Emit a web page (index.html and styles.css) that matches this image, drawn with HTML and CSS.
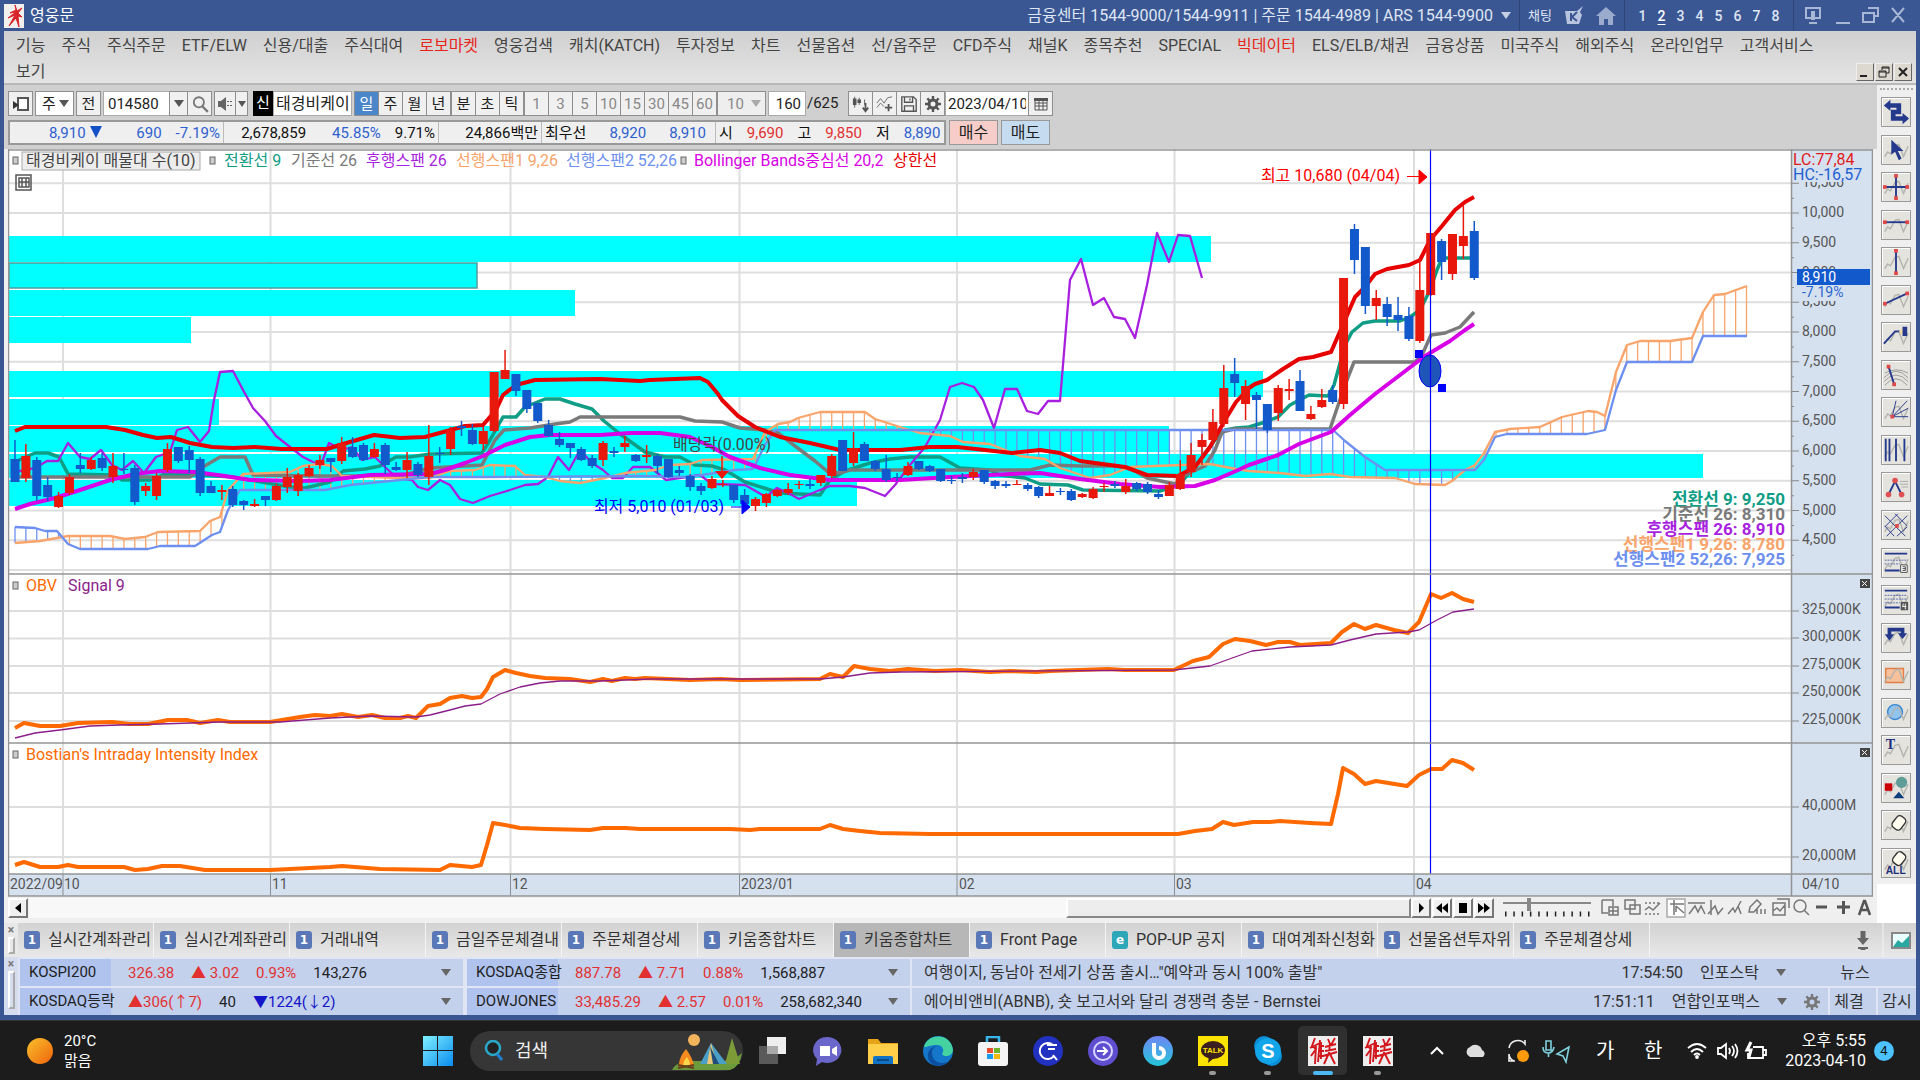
FILE: index.html
```
<!DOCTYPE html>
<html lang="ko">
<head>
  <meta charset="UTF-8" />
  <title>영웅문</title>
  <meta name="viewport" content="width=device-width, initial-scale=1.0" />
  <link rel="stylesheet" href="styles.css">
</head>
<body>
  <!-- shared shapes -->
  <svg class="defs" aria-hidden="true">
    <symbol id="wave" viewBox="0 0 30 30"><path d="M3 22l3-5 3 2 5-9 4-1 5 13 5-11" fill="none" stroke="#b3b3ae" stroke-width="1.5"/></symbol>
    <symbol id="gear" viewBox="0 0 16 16"><circle cx="8" cy="8" r="4" fill="none" stroke="currentColor" stroke-width="3"/><path d="M8 0v3M8 13v3M0 8h3M13 8h3M2.300 2.300l2.200 2.200M11.500 11.500l2.200 2.200M2.300 13.700l2.200-2.200M11.500 4.500l2.200-2.200" stroke="currentColor" stroke-width="2.400"/></symbol>
    <symbol id="lens" viewBox="0 0 16 16"><circle cx="7" cy="6.500" r="4.500" fill="none" stroke="currentColor" stroke-width="1.600"/><path d="M10 10l5 5" stroke="currentColor" stroke-width="2"/></symbol>
    <symbol id="hero" viewBox="0 0 30 30"><rect width="30" height="30" fill="#eee"/><path d="M7 2L4 10l4 3-5 7M2 12l10-5M8 9l-1 19M12 4l-2 22M11 10h5M11 15h5M11 20h5M13 6v17M20 3l2 5M27 2l-4 7M17 11l11-3M17 15l11-2M22 7l-1 11M15 20l14-4M21 17l-5 11M22 18l5 10" fill="none" stroke="#d2161c" stroke-width="1.900"/></symbol>
  </svg>

  <div class="app">
    <header class="titlebar">
      <svg class="brand" viewBox="0 0 20 24"><rect width="20" height="24" fill="#f3efec"/><path d="M11 1l1 5-6 3 6-1-8 6 7-3-6 11 7-8 3 9-1-11 4 1-4-4 4-5-5 3z" fill="#d8242a" stroke="#d8242a"/></svg>
      <span class="appname">영웅문</span>
      <span class="phones">금융센터 1544-9000/1544-9911 | 주문 1544-4989 | ARS 1544-9900</span>
      <span class="tri light"></span>
      <span class="vline"></span>
      <span class="chat">채팅</span>
      <svg width="20" height="20" viewBox="0 0 20 20"><path d="M1 5h12l6-5-3 6 2 3-3 9H3z" fill="#b9c4de"/><path d="M7 7v8M13 6l-5 5 5 4" stroke="#3a5794" stroke-width="2" fill="none"/></svg>
      <svg class="home" width="20" height="20" viewBox="0 0 20 20"><path d="M0 10L10 1l10 9h-3v9h-5v-6H8v6H3v-9z" fill="#9aabce"/></svg>
      <span class="vline"></span>
      <nav class="screens"><b>1</b><b class="on">2</b><b>3</b><b>4</b><b>5</b><b>6</b><b>7</b><b>8</b></nav>
      <span class="vline"></span>
      <svg class="winbtns" width="104" height="20" viewBox="0 0 104 20" fill="none" stroke="#a9b7d6" stroke-width="2"><path d="M4 2h14v10H4zM7 17h8M34 17h14M66 2h10v8h-4M61 7h11v9H61zM90 2l12 14M102 2L90 16"/><path d="M9 5h4v9H9z" fill="#a9b7d6" stroke="none"/></svg>
    </header>

    <nav class="menu">
      <div class="menu-row">
        <a>기능</a><a>주식</a><a>주식주문</a><a>ETF/ELW</a><a>신용/대출</a><a>주식대여</a><a class="hot">로보마켓</a><a>영웅검색</a><a>캐치(KATCH)</a><a>투자정보</a><a>차트</a><a>선물옵션</a><a>선/옵주문</a><a>CFD주식</a><a>채널K</a><a>종목추천</a><a>SPECIAL</a><a class="hot">빅데이터</a><a>ELS/ELB/채권</a><a>금융상품</a><a>미국주식</a><a>해외주식</a><a>온라인업무</a><a>고객서비스</a>
      </div>
      <div class="menu-row">
        <a>보기</a>
        <div class="mdi">
          <button aria-label="최소화"><svg viewBox="0 0 14 14"><path d="M2 11h7" stroke="#222" stroke-width="2"/></svg></button>
          <button aria-label="복원"><svg viewBox="0 0 14 14"><path d="M5 5V2h7v6H9M2 6h7v6H2zM2 7h7M5 3h7" fill="none" stroke="#222"/></svg></button>
          <button aria-label="닫기"><svg viewBox="0 0 14 14"><path d="M3 3l8 8M11 3l-8 8" stroke="#222" stroke-width="2"/></svg></button>
        </div>
      </div>
    </nav>

    <div class="work">
      <main class="main">
        <div class="toolbar">
          <button class="w24" aria-label="창"><svg viewBox="0 0 18 18"><path d="M6 3h10v12H6z" fill="#fff" stroke="#555" stroke-width="2"/><path d="M1 6l6 4-6 4z" fill="#333"/></svg></button>
          <span class="pick w39"><select aria-label="종목구분"><option>주</option></select></span>
          <button class="w24">전</button>
          <input class="code" value="014580" aria-label="종목코드">
          <button class="w18 joined" aria-label="목록"><span class="tri"></span></button>
          <button class="w24 joined" aria-label="검색"><svg viewBox="0 0 16 16" color="#777"><use href="#lens"/></svg></button>
          <button class="w21" aria-label="소리"><svg viewBox="0 0 18 18"><path d="M2 6h3l5-4v14l-5-4H2z" fill="#666"/><path d="M12 6v1M12 10v1M15 6v1M15 10v1" stroke="#666" stroke-width="2"/></svg></button>
          <button class="w12 joined" aria-label="소리 목록"><span class="tri small"></span></button>
          <span class="badge-new">신</span><span class="stock">태경비케이</span>
          <div class="seg"><button class="on">일</button><button>주</button><button>월</button><button>년</button></div>
          <div class="seg"><button>분</button><button>초</button><button>틱</button></div>
          <div class="seg dim"><button>1</button><button>3</button><button>5</button><button>10</button><button>15</button><button>30</button><button>45</button><button>60</button></div>
          <span class="pick w48 dim"><select aria-label="틱수"><option>10</option></select></span>
          <input class="count" value="160" aria-label="봉수"><span class="total">/625</span>
          <div class="seg icons">
            <button aria-label="차트형태"><svg viewBox="0 0 20 20"><path d="M3 2v12M8 3v8M14 5v6" stroke="#555"/><path d="M1 4h4v7H1zM6 5h4v4H6z" fill="#555"/><path d="M15 9v8M12 14l3 4 3-4" stroke="#555" stroke-width="2" fill="none"/></svg></button>
            <button aria-label="지표"><svg viewBox="0 0 20 20"><path d="M1 9l4-5 4 5 4-6 5-1M1 14l4-5 4 4" stroke="#666" fill="none"/><path d="M14 10v8M10 14h8" stroke="#555" stroke-width="2"/></svg></button>
            <button aria-label="저장"><svg viewBox="0 0 20 20"><path d="M2 2h13l3 3v13H2zM5 2v6h9V2M5 18v-6h10v6M11 4v2" fill="none" stroke="#555" stroke-width="1.500"/></svg></button>
            <button aria-label="설정"><svg viewBox="0 0 18 18" color="#555"><use href="#gear" x="1" y="1" width="16" height="16"/></svg></button>
          </div>
          <input class="date" value="2023/04/10" aria-label="날짜"><button class="w24 joined" aria-label="달력"><svg viewBox="0 0 18 18"><path d="M3 4h12v11H3zM3 8h12M3 11h12M7 5v10M11 5v10" fill="none" stroke="#555"/><path d="M2 3h14v3H2z" fill="#555"/></svg></button>
        </div>

        <div class="quote-row">
          <div class="quote">
            <div class="cell c1"><span class="dn">8,910<i class="tri down"></i></span><span class="dn">690</span><span class="dn">-7.19%</span></div>
            <div class="cell c2"><span>2,678,859</span><span class="dn">45.85%</span><span>9.71%</span></div>
            <div class="cell c3"><span>24,866백만</span></div>
            <div class="cell c4"><span>최우선</span><span class="dn">8,920</span><span class="dn">8,910</span></div>
            <div class="cell c5"><span>시</span><span class="up">9,690</span><span>고</span><span class="up">9,850</span><span>저</span><span class="dn">8,890</span></div>
          </div>
          <button class="buy">매수</button>
          <button class="sell">매도</button>
        </div>

        <svg class="chart" id="chart" viewBox="8 149 1865 748" preserveAspectRatio="xMinYMin meet"></svg>

        <div class="scroll">
          <button aria-label="왼쪽"><svg viewBox="0 0 16 16"><path d="M11 3v10L5 8z"/></svg></button>
          <div class="track"><div class="thumb"></div></div>
          <button aria-label="재생"><svg viewBox="0 0 16 16"><path d="M6 3v10l5-5z"/></svg></button>
          <button aria-label="뒤로"><svg viewBox="0 0 16 16"><path d="M8 3v10L2 8zM14 3v10L8 8z"/></svg></button>
          <button aria-label="정지"><svg viewBox="0 0 16 16"><path d="M4 3h8v10H4z"/></svg></button>
          <button aria-label="앞으로"><svg viewBox="0 0 16 16"><path d="M2 3v10l6-5zM8 3v10l6-5z"/></svg></button>
          <svg class="speed" width="88" height="20" viewBox="0 0 88 20"><path d="M0 5h88" stroke="#888" stroke-width="2"/><path d="M26 0v13" stroke="#888" stroke-width="4"/><path d="M2 16h86" stroke="#222" stroke-width="5" stroke-dasharray="1.500 6.800"/></svg>
          <svg class="drawtools" width="272" height="20" viewBox="0 0 272 20" fill="none" stroke="#777" stroke-width="1.500">
            <path d="M1 2h11v6M1 2v13h6M8 9h9v8H8zM12 9v8M8 13h9M24 2h10v9H24zM29 7h10v9H29z"/>
            <path d="M44 5h16M44 16h16" stroke-dasharray="2 2"/><path d="M44 12l4-3 4 3 7-7"/>
            <path d="M66 1v18h18V1z" stroke="#aaa" fill="#fff"/><path d="M69 6h14M73 2v15M75 8l8 7M75 8v6"/>
            <path d="M87 5h17M88 16l6-8 3 6 3-6 4 8M110 2v15M107 16l7-8 3 8 5-6M127 16l5-6 2 4 6-11M137 8l3 8M149 9l7-7 4 4-7 8h-5zM156 11v5M160 11v5M164 11v5"/>
            <path d="M176 1h12v9M172 5h12v12h-12zM172 13l4-3 3 3 5-6"/><circle cx="199" cy="8" r="6"/><path d="M203 12l5 5"/>
            <path d="M215 9h11M236 9h13M242.500 3v13" stroke="#555" stroke-width="3"/><path d="M258 17l5-14h1l5 14M260 12h7" stroke="#555" stroke-width="2.500"/>
          </svg>
        </div>
      </main>

      <aside class="tools">
        <div class="grip"></div>
        <div class="toolset" id="toolset"></div>
      </aside>
    </div>

    <div class="tabs">
      <div class="dock"><b>×</b><i></i></div>
      <button><em>1</em>실시간계좌관리</button>
      <button><em>1</em>실시간계좌관리</button>
      <button><em>1</em>거래내역</button>
      <button><em>1</em>금일주문체결내</button>
      <button><em>1</em>주문체결상세</button>
      <button><em>1</em>키움종합차트</button>
      <button class="on"><em>1</em>키움종합차트</button>
      <button><em>1</em>Front Page</button>
      <button><em class="ie">e</em>POP-UP 공지</button>
      <button><em>1</em>대여계좌신청화</button>
      <button><em>1</em>선물옵션투자위</button>
      <button><em>1</em>주문체결상세</button>
      <svg class="tabend" width="66" height="34" viewBox="0 0 66 34"><path d="M13 8v9M13 24v3" stroke="#666" stroke-width="5"/><path d="M7 15h12l-6 7zM8 24h10v2H8z" fill="#666"/><path d="M33 0v34" stroke="#f4f4f4"/><path d="M42 10h18v15H42z" fill="#e9ffff" stroke="#888" stroke-width="2"/><path d="M43 24l5-7 4 3 7-7v11z" fill="#2aa7a0"/></svg>
    </div>

    <div class="ticker">
      <div class="dock tall"><b>×</b><i></i></div>
      <div class="lines">
        <div class="line">
          <div class="idx"><span class="lbl">KOSPI200</span><span class="v up">326.38</span><span class="v up">▲ 3.02</span><span class="v up">0.93%</span><span class="v">143,276</span><span class="tri"></span></div>
          <div class="idx"><span class="lbl">KOSDAQ종합</span><span class="v up">887.78</span><span class="v up">▲ 7.71</span><span class="v up">0.88%</span><span class="v">1,568,887</span><span class="tri"></span></div>
          <div class="news"><span class="head">여행이지, 동남아 전세기 상품 출시…"예약과 동시 100% 출발"</span><span>17:54:50</span><span>인포스탁</span><span class="tri"></span><span class="tag wide">뉴스</span></div>
        </div>
        <div class="line">
          <div class="idx"><span class="lbl">KOSDAQ등락</span><span class="v up">▲306(↑7)</span><span class="v">40</span><span class="v navy">▼1224(↓2)</span><span class="tri"></span></div>
          <div class="idx"><span class="lbl">DOWJONES</span><span class="v up">33,485.29</span><span class="v up">▲ 2.57</span><span class="v up">0.01%</span><span class="v">258,682,340</span><span class="tri"></span></div>
          <div class="news"><span class="head">에어비앤비(ABNB), 숏 보고서와 달리 경쟁력 충분 - Bernstei</span><span>17:51:11</span><span>연합인포맥스</span><span class="tri"></span><svg class="gear" viewBox="0 0 16 16" color="#777"><use href="#gear"/></svg><span class="tag">체결</span><span class="tag">감시</span></div>
        </div>
      </div>
    </div>
  </div>

  <footer class="taskbar">
    <div class="weather">
      <svg width="28" height="28" viewBox="0 0 28 28"><defs><linearGradient id="sun" x2="1" y2="1"><stop stop-color="#f8c12c"/><stop offset="1" stop-color="#f0630c"/></linearGradient></defs><circle cx="14" cy="14" r="13" fill="url(#sun)"/></svg>
      <div>20°C<br>맑음</div>
    </div>
    <div class="apps">
      <svg class="start" viewBox="0 0 30 30"><defs><linearGradient id="win" x2="1" y2="1"><stop stop-color="#7ff0ff"/><stop offset="1" stop-color="#0a8cf0"/></linearGradient></defs><path d="M0 0h14v14H0zM15 0h15v14H15zM0 15h14v15H0zM15 15h15v15H15z" fill="url(#win)"/></svg>
      <label class="search">
        <svg width="20" height="22" viewBox="0 0 20 22"><circle cx="10" cy="8" r="7" fill="#222" stroke="#2aa8c8" stroke-width="2.500"/><path d="M14 14l5 6" stroke="#1c7fd0" stroke-width="3"/></svg>
        <input placeholder="검색">
        <svg class="camp" width="70" height="38" viewBox="0 0 70 38"><path d="M0 38q4-9 22-9h30q12-2 18-8-2 14-12 17z" fill="#6b9a3a"/><circle cx="22" cy="8" r="6" fill="#f3b55c"/><path d="M60 6l8 26H53z" fill="#7d9c38"/><path d="M28 32l11-21 16 21z" fill="#4a9fc8"/><path d="M39 11l-4 21h10z" fill="#e7c67a"/><path d="M38 14l3 18h6z" fill="#1f4d78"/><path d="M7 33q0-8 7-16 6 8 8 16z" fill="#f58a1f"/><path d="M11 33q1-5 4-8 3 4 3 8z" fill="#ffd84a"/><path d="M6 33l16 3M22 33L6 36" stroke="#6b3f1c" stroke-width="2"/></svg>
      </label>
      <div class="app-icon"><svg viewBox="0 0 30 30"><path d="M1 10h19v18H1z" fill="#5a5a5a"/><path d="M9 1h19v17H9z" fill="#eee"/><path d="M9 10h11v8H9z" fill="#aaa"/></svg></div>
      <div class="app-icon"><svg viewBox="0 0 30 30"><path d="M15 1a14 13 0 1 1-6 25l-6 4 1-7A14 13 0 0 1 15 1z" fill="#6b66c9"/><path d="M7 10h10v10H7zM19 13l5-3v10l-5-3z" fill="#fff"/></svg></div>
      <div class="app-icon"><svg viewBox="0 0 30 30"><path d="M0 3h10l3 4h17v21H0z" fill="#e6a317"/><path d="M0 8h30v20H0z" fill="#ffcf4a"/><path d="M5 28v-6q0-2 2-2h16q2 0 2 2v6z" fill="#1272c4"/><path d="M9 24h12" stroke="#0a4a8a" stroke-width="2"/></svg></div>
      <div class="app-icon"><svg viewBox="0 0 30 30"><circle cx="15" cy="15" r="15" fill="#1577c9"/><path d="M1 11C4-3 28-4 30 14c0 6-9 8-11 4 3-5 0-9-5-9-7 0-12 3-13 2z" fill="#43d2a0"/><path d="M9 17c0 8 8 13 17 8-4 6-19 8-21-4-1-7 5-11 9-11-3 1-5 3-5 7z" fill="#0c4f9e"/></svg></div>
      <div class="app-icon"><svg viewBox="0 0 30 30"><path d="M9 7V1h12v6" fill="none" stroke="#35b5ea" stroke-width="2.500"/><rect y="6" width="30" height="24" rx="3" fill="#f4f4f4"/><path d="M9 12h6v5H9z" fill="#e74c2c"/><path d="M16 12h6v5h-6z" fill="#6fb52c"/><path d="M9 18h6v5H9z" fill="#1c9be8"/><path d="M16 18h6v5h-6z" fill="#f5b80e"/></svg></div>
      <div class="app-icon"><svg viewBox="0 0 30 30"><circle cx="15" cy="15" r="15" fill="#2131c0"/><path d="M20 9a8 8 0 1 0 1 11M14 9h10M15 13h7M20 19l4 5" stroke="#fff" stroke-width="2" fill="none"/></svg></div>
      <div class="app-icon"><svg viewBox="0 0 30 30"><circle cx="15" cy="15" r="15" fill="#5f4fd0"/><circle cx="15" cy="15" r="9" fill="none" stroke="#dcd6ff" stroke-width="2"/><path d="M9 15h10M15 11l4 4-4 4" stroke="#fff" stroke-width="2" fill="none"/></svg></div>
      <div class="app-icon"><svg viewBox="0 0 30 30"><defs><linearGradient id="bix" x2="0" y2="1"><stop stop-color="#6f86f5"/><stop offset="1" stop-color="#22c6d8"/></linearGradient></defs><circle cx="15" cy="15" r="15" fill="url(#bix)"/><path d="M11 7v10a5 5 0 1 0 5-5" fill="none" stroke="#fff" stroke-width="4"/></svg></div>
      <div class="app-icon run"><svg viewBox="0 0 30 30"><rect width="30" height="30" fill="#fbe300"/><ellipse cx="15" cy="14" rx="12" ry="9" fill="#3b1e1e"/><path d="M11 20l-1 7 6-5z" fill="#3b1e1e"/><text x="15" y="17" text-anchor="middle" class="talk">TALK</text></svg></div>
      <div class="app-icon run"><svg viewBox="0 0 30 30"><circle cx="11" cy="10" r="10" fill="#0a8fd8"/><circle cx="19" cy="20" r="10" fill="#0a8fd8"/><circle cx="15" cy="15" r="13" fill="#12a5ea"/><text x="15" y="22" text-anchor="middle" class="skype">S</text></svg></div>
      <div class="app-icon run active"><svg viewBox="0 0 30 30"><use href="#hero"/></svg></div>
      <div class="app-icon run"><svg viewBox="0 0 30 30"><use href="#hero"/></svg></div>
    </div>
    <div class="tray">
      <svg width="142" height="26" viewBox="0 0 142 26" fill="none"><path d="M2 16l6-6 6 6" stroke="#fff" stroke-width="2"/><path d="M40 18a5 5 0 0 1 1-9 7 7 0 0 1 12 3 4 4 0 0 1 1 7H41z" fill="#ddd"/><path d="M80 10a9 9 0 0 1 16-4V2M80 16v7h6M80 16a8 8 0 0 0 5 7" stroke="#eee" stroke-width="1.600"/><circle cx="94" cy="18" r="6" fill="#ff9a0c"/><path d="M117 3h5v9h-5zM114 9q0 6 5 6t6-6M119.500 15v4" stroke="#7fd0dc" stroke-width="1.600"/><path d="M140 9l-12 7 6 2 3 6z" stroke="#7fd0dc" stroke-width="1.600"/></svg>
      <span class="ime">가</span><span class="ime">한</span>
      <svg width="80" height="24" viewBox="0 0 80 24" fill="none" stroke="#fff" stroke-width="1.800"><path d="M1 9q9-8 18 0M4 13q6-6 12 0M7 16q3-3 6 0"/><circle cx="10" cy="18" r="1"/><path d="M31 9h3l5-4v14l-5-4h-3zM42 9q2 3 0 6M45 7q4 5 0 10M48 5q5 7 0 14"/><path d="M66 8h10v11H61v-5M76 11h3v5h-3"/><path d="M64 3l-4 8h4l-2 7" stroke-width="3"/></svg>
      <div class="clock">오후 5:55<br>2023-04-10</div>
      <span class="count4">4</span>
    </div>
  </footer>
  <script src="chart.js"></script>
</body>
</html>
```
FILE: styles.css
```
* { box-sizing: border-box; }
body {
  margin: 0;
  min-height: 100vh;
  display: flex;
  flex-direction: column;
  overflow: hidden;
  background: #1c1c1c;
  font-family: Roboto, "Noto Sans CJK KR", sans-serif;
  font-size: 16px;
  line-height: 20px;
  color: #333;
}
button, input, select { font: inherit; color: inherit; margin: 0; }
button { padding: 0; display: flex; align-items: center; justify-content: center; }
.defs { position: absolute; width: 0; height: 0; }
.app { flex: 1; display: flex; flex-direction: column; border: solid #3a5794; border-width: 0 4px 5px; background: #efefef; }
.up { color: #e23030; }
.dn { color: #2e5fd0; }
.navy { color: #1414c8; }
.tri { flex: none; width: 0; height: 0; border: solid transparent; border-width: 7px 5px 0; border-top-color: #555; }
.tri.small { border-width: 6px 4px 0; border-top-color: #555; }
.tri.light { border-top-color: #c5cee2; }
.tri.down { display: inline-block; border-width: 12px 6px 0; border-top-color: #1450c8; margin-left: 4px; }

/* title bar */
.titlebar {
  height: 31px;
  margin: 0 -4px;
  padding: 0 4px;
  display: flex;
  align-items: center;
  background: #3a5794;
  color: #dfe5f2;
}
.brand { width: 20px; height: 24px; margin-right: 6px; }
.appname { flex: 1; color: #fff; }
.phones { margin-right: 8px; }
.vline { width: 1px; height: 31px; background: #2d4577; margin: 0 8px; }
.chat { font-size: 13px; margin-right: 12px; }
.home { margin-left: 12px; }
.screens { display: flex; }
.screens b { width: 19px; text-align: center; font-size: 14px; font-weight: 500; line-height: 18px; }
.screens .on { color: #fff; text-decoration: underline; text-underline-offset: 3px; }
.winbtns { margin-right: 10px; }

/* menu */
.menu { height: 54px; padding: 2px 4px 0 12px; background: linear-gradient(#d0d0d0, #e4e4e4); border-bottom: 2px solid #b8b8b8; }
.menu-row { display: flex; gap: 16px; height: 26px; align-items: center; white-space: nowrap; color: #444; }
.hot { color: #e8251b; }
.mdi { margin-left: auto; display: flex; gap: 1px; }
.mdi button { width: 18px; height: 18px; border: 1px solid #777; border-color: #eee #666 #666 #eee; background: #ddd9d0; }
.mdi svg { width: 14px; height: 14px; }

.work { display: flex; flex: 1; }
.main { flex: 1; min-width: 0; padding: 6px 4px 0; background: linear-gradient(#d0d0d0 64px, #efefef 64px); }

/* toolbars */
.toolbar { display: flex; height: 25px; align-items: stretch; gap: 2px; font-size: 15px; white-space: nowrap; color: #222; }
.toolbar button, .toolbar input { height: 25px; border: 1px solid #8f8f8f; background: #f0f0f0; }
.toolbar button svg { width: 18px; height: 18px; }
.toolbar input { background: #fff; padding: 0 4px; border-color: #aaa; }
.pick { position: relative; display: block; background: #fff; border: 1px solid #8f8f8f; }
.pick select { appearance: none; width: 100%; height: 23px; padding: 0 18px 0 6px; border: 0; background: none; }
.pick.dim select { padding-left: 9px; }
.pick::after { content: ""; position: absolute; right: 4px; top: 8px; border: solid transparent; border-width: 7px 5px 0; border-top-color: #555; pointer-events: none; }
.pick.dim { background: #eee; }
.pick.dim::after { border-top-color: #aaa; }
.toolbar .dim, .toolbar .dim button { color: #888; }
.toolbar .joined { margin-left: -3px; }
.w12 { width: 13px; }
.w18 { width: 19px; }
.w21 { width: 22px; }
.w24 { width: 25px; }
.w39 { width: 39px; }
.w48 { width: 49px; }
.toolbar .code { width: 67px; }
.toolbar .count { width: 38px; text-align: right; }
.toolbar .date { width: 84px; padding: 0 2px; }
.total { width: 39px; line-height: 25px; margin-left: -1px; }
.badge-new { width: 20px; margin-left: 3px; background: #000; color: #fff; text-align: center; line-height: 25px; }
.stock { width: 79px; margin-left: -2px; background: #fff; border: 1px solid #aaa; padding-left: 2px; line-height: 23px; font-size: 16px; overflow: hidden; }
.seg { display: flex; margin-right: -1px; }
.seg button { width: 25px; margin-right: -1px; }
.toolbar .seg .on { background: #4a86c8; color: #fff; }
.quote-row { display: flex; gap: 3px; margin-top: 4px; margin-bottom: 4px; height: 25px; font-size: 15px; white-space: nowrap; }
.quote { display: flex; width: 938px; background: #efefef; border: 2px solid #999; color: #111; }
.cell { flex: none; display: flex; justify-content: flex-end; align-items: center; gap: 14px; padding: 0 3px; border-right: 1px solid #bbb; }
.cell:last-child { border: 0; }
.c1 { width: 214px; }
.c1 span:nth-child(2) { width: 46px; text-align: right; }
.c2 { width: 215px; }
.c2 span:nth-child(2) { margin-left: 12px; }
.c3 { width: 103px; }
.c4 { width: 174px; justify-content: space-between; padding-right: 9px; }
.c5 { flex: 1; justify-content: space-between; padding-right: 10px; }
.buy, .sell { width: 49px; border: 1px solid #999; font-size: 16px; color: #222; }
.buy { background: #f6cdc9; }
.sell { background: #c5dcf0; }

/* chart */
.chart { display: block; width: 100%; height: auto; background: #fff; }
.chart text { font-size: 16px; fill: #555; }
.chart text.ax { font-size: 14px; }
.chart text.val { font-size: 17px; font-weight: 700; text-anchor: end; }
.chart .end { text-anchor: end; }

.scroll { display: flex; height: 26px; align-items: flex-start; padding-top: 1px; }
.scroll button { width: 20px; height: 20px; margin-right: 1px; background: #f0f0f0; border: 2px solid #777; border-color: #fff #777 #777 #fff; }
.scroll button svg { width: 16px; height: 16px; flex: none; }
.track { flex: 1; height: 20px; background: #f8f8f8; display: flex; justify-content: flex-end; }
.thumb { width: 25%; background: #ededed; border: 2px solid #888; border-color: #fff #888 #888 #fff; }
.speed { margin: 0 10px 0 8px; }

/* drawing tools */
.tools { width: 39px; background: #efefef; display: flex; flex-direction: column; border-bottom: 39px solid #fff; }
.grip { height: 3px; margin: 3px 3px 6px; border-top: 2px dotted #aaa; }
.toolset { flex: 1; display: flex; flex-direction: column; justify-content: space-between; align-items: center; padding: 0 1px 6px 0; }
.toolset button { width: 30px; height: 30px; background: #e4e3de; border: 1px solid #9a9a9a; box-shadow: inset 1px 1px #fff; }
.toolset svg { width: 28px; height: 28px; flex: none; }
.toolset text { font: bold 15px "Liberation Serif", serif; fill: #1c2f7c; }
.toolset text.all { font: bold 11px "Liberation Sans", sans-serif; }

/* window tabs */
.tabs { height: 34px; display: flex; background: linear-gradient(#d2d2d2, #e8e8e8); overflow: hidden; color: #333; }
.dock { width: 14px; flex: none; text-align: center; background: #e8e8e8; color: #777; }
.dock b { display: block; height: 14px; line-height: 14px; font-size: 12px; }
.dock i { display: block; width: 7px; height: 17px; margin: 0 auto; border: 2px solid #aaa; border-color: #fff #aaa #aaa #fff; }
.tabs button { flex: 0 1 136px; min-width: 0; justify-content: flex-start; gap: 8px; padding-left: 6px; border: 0; border-right: 1px solid #f4f4f4; background: none; white-space: nowrap; overflow: hidden; font-size: 16px; }
.tabs .on { background: #b7b7b7; }
.tabs em { flex: none; width: 16px; height: 18px; text-align: center; border-radius: 3px; background: #5a78b8; color: #fff; font: bold 12px/18px "DejaVu Sans", sans-serif; }
.tabs em.ie { background: #2ea8b8; }
.tabend { flex: none; margin-left: auto; }

/* index and news lines */
.ticker { display: flex; background: #c3d1ec; color: #222; font-size: 15px; }
.dock.tall { background: #d4dcee; }
.dock.tall i { height: 38px; }
.lines { flex: 1; }
.line { display: flex; height: 29px; border-top: 2px solid #dfe5f2; white-space: nowrap; }
.idx { width: 447px; display: flex; align-items: center; gap: 17px; padding-right: 12px; border-right: 2px solid #dfe5f2; }
.lbl { width: 93px; align-self: stretch; padding-left: 9px; line-height: 27px; background: #afc3ee; border-left: 2px solid #dfe5f2; }
.idx .tri, .news .tri { border-top-color: #666; }
.idx .tri { margin-left: auto; }
.news { flex: 1; display: flex; align-items: center; gap: 17px; padding-left: 12px; font-size: 16px; color: #333; }
.head { flex: 1; }
.gear { width: 16px; height: 16px; }
.tag { width: 40px; text-align: center; border-left: 2px solid #dfe5f2; line-height: 27px; margin-left: -9px; }
.tag.wide { width: 122px; border: 0; }

/* taskbar */
.taskbar { height: 60px; display: flex; align-items: center; background: #1c1c1c; color: #fff; padding: 0 26px; border-top: 1px solid #333; }
.weather { width: 397px; display: flex; gap: 10px; align-items: center; font-size: 15px; }
.apps { display: flex; align-items: center; }
.start { width: 30px; height: 30px; margin-right: 17px; }
.search { width: 273px; height: 40px; border-radius: 20px; background: #363636; display: flex; align-items: center; padding: 0 1px 0 13px; gap: 12px; margin-right: 5px; }
.search input { flex: 1; min-width: 0; border: 0; background: none; color: #fff; padding: 0; outline: 0; font-size: 18px; }
.search input::placeholder { color: #f0f0f0; }
.app-icon { width: 49px; height: 49px; margin-right: 6px; border-radius: 5px; position: relative; display: flex; align-items: center; justify-content: center; }
.app-icon svg { width: 30px; height: 30px; }
.app-icon.run::after { content: ""; position: absolute; bottom: 0; width: 7px; height: 4px; border-radius: 2px; background: #999; }
.app-icon.active { background: #303030; }
.app-icon.active::after { width: 20px; background: #4cb8f5; }
.talk { font: bold 8px "Liberation Sans", sans-serif; fill: #fbe300; }
.skype { font: bold 20px "Liberation Sans", sans-serif; fill: #fff; }
.tray { display: flex; align-items: center; margin-left: auto; gap: 20px; }
.ime { font-size: 20px; width: 22px; text-align: center; margin: 0 3px; }
.clock { text-align: right; font-size: 16px; margin-left: -2px; }
.count4 { width: 20px; height: 20px; border-radius: 50%; background: #4cc2ff; color: #111; font-size: 13px; text-align: center; margin-left: -12px; }
```
FILE: chart.js
```
const svg = document.getElementById("chart");
const RED = "#e8190c", BLUE = "#1259cc";
const TEAL = "#0f9d85", GRAY = "#7a7a7a", MAGENTA = "#d800e6", PURPLE = "#a81fe0", ORANGE = "#f9a46a", SKY = "#6d90f0";
let out = "";

const xAt = i => 15 + 10.89 * i;
const rect = (x, y, w, h, fill, extra = "") => { out += `<rect x="${x}" y="${y}" width="${w}" height="${h}" fill="${fill}" ${extra}/>`; };
const line = (x1, y1, x2, y2, color, w = 1) => { out += `<path d="M${x1} ${y1}L${x2} ${y2}" stroke="${color}" stroke-width="${w}"/>`; };
const poly = (pts, color, w) => { out += `<polyline points="${pts}" fill="none" stroke="${color}" stroke-width="${w}" stroke-linejoin="round"/>`; };
const text = (x, y, s, color = "", cls = "") => { out += `<text x="${x}" y="${y}" class="${cls}" ${color && `style="fill:${color}"`}>${s}</text>`; };

// price panel grid
const GRID = "#dedede";
for (let p = 4000; p <= 10500; p += 500) line(8, 213 + (10000 - p) * 0.0595, 1791, 213 + (10000 - p) * 0.0595, GRID, 2);
[611, 638.5, 666, 693, 721, 807, 857].forEach(y => line(8, y, 1791, y, GRID, 2));
[63, 270.5, 510.5, 739.5, 957, 1174.5, 1414].forEach(x => line(x, 149, x, 874, GRID, 2));

// volume by price
[[236, 1211], [290, 575], [317, 191], [371, 1263], [399, 219], [426, 1169], [454, 1703], [480, 857]].forEach(([y, x]) => rect(9, y, x - 9, y === 454 ? 24 : 26, "#00ffff"));
rect(9, 263, 468, 25, "#00ffff", 'stroke="#4f9c9c" stroke-width="1.5"');

// dir, open/close top, bottom, high, low
const candles = `b459,482,440,482 r456,478,444,482 b460,496,457,501 b485,497,477,501 r496,507,492,508 r477,493,474,495 b465,469,453,473 r460,469,457,470 b458,468,453,471 r466,477,453,483
b469,470,453,474 b468,502,465,505 r486,491,483,496 r476,496,473,500 r449,470,443,472 b447,461,447,463 b450,460,446,473 b459,493,457,496 b486,493,481,493 r490,492,485,500
b489,505,486,507 b501,505,500,510 r504,506,499,507 b496,500,496,506 r486,500,484,501 r477,487,468,493 r475,491,473,496 r468,476,465,477 r460,465,455,469 b458,462,458,472
r443,461,437,464 b447,457,437,458 b445,460,443,461 r449,457,443,458 b445,465,443,474 b467,470,462,471 r460,470,452,478 b464,475,462,477 r456,477,425,485 b453,454,447,463
r430,449,427,455 b426,428,421,436 b430,444,424,445 r431,444,427,450 r372,431,372,432 r370,379,350,379 b374,391,374,396 b390,409,390,413 b403,421,403,423 b425,436,420,437
b439,445,432,447 b443,448,443,458 b449,460,447,461 b458,466,455,468 r443,460,441,466 b451,453,447,457 r443,447,436,452 b455,461,454,462 r455,457,445,463 b456,466,454,474
b459,477,459,478 b470,473,466,476 b476,487,474,491 b486,491,483,495 r479,488,476,489 r484,485,480,487 b485,500,485,503 b495,504,489,507 r499,506,497,511 r494,503,493,507
r490,496,489,497 r489,493,483,495 r484,485,481,489 b484,486,479,489 r475,483,475,486 r456,476,454,478 b440,471,440,471 r448,463,432,466 b444,461,442,461 b461,469,460,471
b469,480,455,482 b477,478,473,481 r466,475,462,476 b461,469,461,470 b466,471,465,472 b469,481,469,482 b480,481,476,484 b477,479,473,483 r472,477,469,480 b470,482,470,484
b481,486,480,489 b484,486,481,488 r484,485,480,485 b485,489,483,491 b487,496,486,498 r493,496,486,496 b491,492,488,495 b491,500,489,501 r494,497,493,498 r489,498,487,499
r486,487,483,492 b484,486,481,488 r486,492,479,494 b483,489,482,491 b484,492,482,494 b494,497,490,499 r485,496,482,496 r474,489,460,490 r455,472,443,477 r440,447,434,465
r422,440,409,443 r388,424,365,427 b374,383,358,397 r386,404,380,420 b395,400,392,429 b404,430,404,433 r388,413,385,421 r389,391,379,400 b381,411,370,411 r414,419,406,420
r400,407,389,408 b390,402,385,404 r278,404,278,409 b229,260,224,274 b247,306,247,314 r298,306,290,320 b304,317,297,326 b315,320,297,331 b316,339,307,341 r290,341,258,343
r233,295,233,296 b241,262,239,280 r234,274,234,280 r236,246,205,259 b231,278,221,280`.split(/\s+/);

const span1 = "15,543 40,541 68,536 110,536 125,539 145,537 158,532 200,531 210,521 220,517 228,490 243,474 290,472 303,466 320,464 332,466 342,476 400,478 430,478 450,471 475,470 490,465 515,466 525,475 545,477 560,481 580,483 605,478 625,473 655,470 670,465 690,464 702,460 753,459 765,432 778,424 790,422 798,418 820,412 865,412 875,419 900,427 920,433 950,436 963,442 990,444 1020,456 1045,459 1060,468 1090,478 1110,475 1130,467 1155,466 1210,464 1236,469 1249,471 1280,473 1305,476 1330,474 1350,477 1395,478 1415,484 1445,485 1452,481 1465,470 1475,465 1484,453 1495,432 1510,429 1540,427 1562,417 1588,411 1597,412 1605,416 1616,372 1627,345 1640,341 1670,341 1692,338 1703,312 1714,295 1725,294 1736,290 1747,286";
const span2 = "15,527 35,528 45,531 57,531 68,544 80,549 148,549 160,546 195,546 212,535 220,532 228,510 240,490 325,490 350,485 430,477 490,477 640,476 690,477 702,475 735,470 753,469 765,445 775,430 1333,430 1345,441 1365,457 1385,470 1475,470 1484,460 1495,437 1507,434 1587,434 1605,430 1616,390 1627,362 1692,362 1703,336 1747,336";

function yOn(pts, x) {
  const p = pts.split(" ").map(s => s.split(",").map(Number));
  for (let i = 1; i < p.length; i++) {
    if (x <= p[i][0]) return p[i - 1][1] + (p[i][1] - p[i - 1][1]) * (x - p[i - 1][0]) / (p[i][0] - p[i - 1][0]);
  }
  return p[p.length - 1][1];
}

// cloud between the two leading spans
for (let i = 0; i < 160; i++) {
  const x = xAt(i), a = yOn(span1, x), b = yOn(span2, x);
  if (Math.abs(a - b) > 2) line(x, a, x, b, a < b ? ORANGE : SKY, 1.3);
}

poly("15,462 28,456 35,453 48,453 59,457 68,474 115,475 122,480 150,480 165,474 200,475 233,477 290,487 305,488 330,482 343,471 365,469 380,466 396,457 410,457 430,454 482,453 490,440 503,417 516,417 525,407 545,399 560,399 575,404 592,409 604,421 620,434 645,452 665,457 680,457 695,465 712,466 725,470 745,482 780,493 820,495 830,480 845,471 870,463 890,459 910,457 940,457 960,468 990,470 1000,475 1025,478 1040,484 1068,485 1083,490 1160,491 1180,484 1200,460 1215,440 1225,430 1236,428 1249,427 1262,423 1278,417 1290,405 1309,395 1328,396 1334,385 1345,345 1352,332 1363,323 1375,321 1400,321 1410,317 1420,310 1430,290 1437,270 1442,258 1474,258", TEAL, 3.5);
poly("15,477 190,477 203,467 220,457 245,457 253,475 320,476 400,476 430,468 482,465 495,440 504,430 530,428 555,424 570,422 580,417 680,417 695,421 722,422 740,428 765,430 778,433 795,446 815,461 828,472 840,473 850,470 1030,470 1050,465 1080,466 1115,466 1130,468 1147,478 1175,484 1185,475 1205,466 1215,450 1222,432 1234,429 1330,429 1345,385 1354,362 1415,362 1422,355 1431,335 1445,333 1460,327 1474,312", GRAY, 3.5);
poly("15,472 35,468 47,461 58,461 68,443 80,457 90,459 101,450 112,465 122,470 133,461 144,473 156,457 170,452 177,430 188,427 200,442 209,431 214,400 220,372 233,371 243,390 253,408 265,421 276,436 290,447 303,457 313,462 321,465 329,443 342,450 352,447 362,460 375,457 385,467 397,478 412,480 418,487 428,490 440,480 450,485 460,499 473,503 490,496 510,490 525,485 538,484 548,477 558,457 569,470 580,450 592,463 603,470 612,478 623,478 633,467 650,467 666,480 700,475 712,484 745,485 766,497 777,488 790,494 799,499 815,492 830,486 850,486 865,488 885,496 895,485 910,465 925,447 940,420 950,387 962,383 974,387 983,400 994,428 1005,389 1017,389 1027,411 1038,414 1048,401 1060,401 1070,280 1081,259 1093,305 1104,298 1114,317 1125,319 1135,338 1147,285 1157,233 1169,262 1178,235 1190,236 1202,278", PURPLE, 2.3);
poly(span1, ORANGE, 2.3);
poly(span2, SKY, 2.3);
poly("15,431 25,427 106,427 125,430 143,435 157,438 171,437 190,443 212,447 233,448 255,447 282,449 327,449 343,444 374,435 400,438 425,437 447,431 465,426 483,425 496,410 503,395 516,385 535,380 600,379 640,381 650,380 700,378 708,382 718,394 722,400 738,416 755,427 780,437 810,443 840,450 900,450 930,447 957,447 985,450 1012,453 1040,450 1060,453 1080,461 1110,465 1125,467 1147,475 1178,476 1195,467 1210,447 1225,420 1236,402 1249,388 1255,384 1267,380 1283,369 1299,359 1313,357 1331,352 1345,320 1355,297 1365,287 1375,274 1387,269 1409,265 1420,260 1430,240 1442,226 1455,210 1465,202 1474,197", "#e60000", 4);
poly("15,509 30,504 55,498 80,490 110,480 135,474 160,471 195,472 225,476 250,480 300,481 330,480 370,475 430,474 445,470 465,463 483,456 505,445 530,437 550,435 600,435 630,433 660,433 690,437 710,446 730,457 760,468 790,475 830,480 900,480 950,477 1010,474 1040,473 1080,479 1120,484 1160,487 1195,486 1215,480 1236,471 1249,465 1278,455 1299,444 1331,432 1350,415 1375,394 1400,375 1425,356 1450,341 1465,330 1474,324", MAGENTA, 4);

candles.forEach((c, i) => {
  const color = c[0] === "r" ? RED : BLUE;
  const [top, bottom, high, low] = c.slice(1).split(",").map(Number);
  line(xAt(i), high, xAt(i), low, color, 1.5);
  rect(xAt(i) - 4.5, top, 9, bottom - top, color);
});

// annotations
text(673, 450, "배당락(0.00%)", "#444");
line(722, 456, 722, 473, RED, 1.5);
out += `<path d="M715 471h14l-7 8z" fill="${RED}"/>`;
text(724, 512, "최저 5,010 (01/03)", "#0000ff", "end");
out += `<path d="M731 507h12M742 500l8 7-8 7z" fill="#0000ff" stroke="#0000ff"/>`;
text(1400, 181, "최고 10,680 (04/04)", "#ff0000", "end");
out += `<path d="M1407 176.500h12M1419 170l8 7-8 7z" fill="#ff0000" stroke="#ff0000"/>`;
out += `<ellipse cx="1430" cy="371" rx="11" ry="16" fill="#1f55b8" stroke="#0000ff"/>`;
rect(1415, 350, 8, 8, "#0000ff");
rect(1438, 384, 8, 8, "#0000ff");

// study panels
const FIRE = "#ff6a00";
poly("15,728 24,723 40,726 60,726 78,723 112,722 130,724 148,724 168,720 187,720 200,723 218,720 230,722 270,722 300,717 315,715 330,716 342,714 358,717 372,715 385,718 400,718 408,716 416,718 428,706 440,704 450,698 462,696 472,698 481,697 487,689 493,677 505,670 516,673 530,676 545,678 570,679 590,682 603,679 612,681 625,678 635,679 645,678 690,680 720,679 740,680 820,679 830,674 843,677 854,666 870,669 890,671 908,669 935,671 960,670 990,672 1010,671 1036,672 1050,671 1108,669 1125,670 1174,670 1193,661 1209,657 1223,644 1235,639 1250,641 1266,645 1278,642 1290,642 1300,645 1331,643 1342,632 1354,624 1365,629 1376,625 1394,630 1408,633 1419,622 1431,594 1441,598 1452,593 1463,599 1474,602", FIRE, 4);
poly("15,738 35,733 60,730 90,726 120,725 160,724 220,722 280,722 330,718 370,716 416,717 430,715 450,710 465,706 481,704 500,694 520,687 540,683 560,681 600,681 650,679 820,679 843,677 870,673 900,672 1174,670 1210,666 1235,657 1252,651 1290,647 1331,645 1350,640 1376,634 1408,632 1419,630 1437,620 1453,612 1474,609", "#8b1e8b", 1.3);
poly("15,865 24,862 40,867 58,867 68,865 78,867 124,867 135,870 148,869 162,866 180,866 205,870 270,870 330,867 342,866 380,869 440,870 450,865 472,867 481,865 487,845 493,823 505,825 520,828 545,829 590,830 603,828 625,828 640,829 730,829 750,830 760,829 820,829 830,825 843,829 860,831 880,833 930,834 1178,834 1195,831 1212,829 1223,822 1234,825 1253,822 1270,822 1280,821 1310,823 1331,824 1338,794 1343,768 1354,774 1365,784 1376,781 1407,786 1419,775 1431,769 1442,769 1452,760 1463,763 1474,770", FIRE, 4);
line(1430.5, 149, 1430.5, 874, "#0000ff", 1.2);

// value axis
rect(1791, 149, 82, 748, "#d5e1ef");
rect(8, 874, 1865, 22, "#d5e1ef");
for (let p = 4500; p <= 10500; p += 500) {
  const y = 213 + (10000 - p) * 0.0595;
  line(1791, y, 1799, y, "#888");
  line(1791, y + 15, 1794, y + 15, "#888");
  text(1802, y + 4, p.toLocaleString("en-US"), "", "ax");
}
rect(1792, 150, 79, 32, "#d5e1ef");
text(1793, 165, "LC:77,84", "#e21a1a");
text(1793, 180, "HC:-16,57", "#1f5fd0");
rect(1797, 284, 74, 17, "#d5e1ef");
rect(1797, 269, 73, 16, BLUE);
text(1802, 282, "8,910", "#fff", "ax");
text(1802, 297, "-7.19%", "#2a66d0", "ax");
[["325,000K", 611], ["300,000K", 638], ["275,000K", 666], ["250,000K", 693], ["225,000K", 721], ["40,000M", 807], ["20,000M", 857]].forEach(([s, y]) => {
  line(1791, y, 1799, y, "#888");
  text(1802, y + 3, s, "", "ax");
});
[["2022/09", 10], ["10", 64], ["11", 272], ["12", 512], ["2023/01", 741], ["02", 959], ["03", 1176], ["04", 1416], ["04/10", 1802]].forEach(([s, x]) => text(x, 889, s, "", "ax"));
[63, 270.5, 510.5, 739.5, 957, 1174.5, 1414].forEach(x => line(x, 874, x, 896, "#8a8f96"));

// frame lines
[150, 574, 743, 874, 896].forEach(y => line(8, y, 1873, y, "#949494", 1.5));
[8.5, 1791.5, 1872.5].forEach(x => line(x, 149, x, 896, "#949494", 1.5));
[582, 751].forEach(y => {
  rect(1860, y - 3, 10, 9, "#444");
  out += `<path d="M1862 ${y - 1}l5 5M1867 ${y - 1}l-5 5" stroke="#fff"/>`;
});

// legends
rect(22, 152, 178, 18, "#ededed", 'stroke="#aaa"');
text(26, 166, "태경비케이 매물대 수(10)", "#444");
text(224, 166, "전환선 9", TEAL);
text(291, 166, "기준선 26", GRAY);
text(366, 166, "후행스팬 26", PURPLE);
text(456, 166, "선행스팬1 9,26", ORANGE);
text(566, 166, "선행스팬2 52,26", SKY);
text(694, 166, "Bollinger Bands중심선 20,2", MAGENTA);
text(893, 166, "상한선", "#e60000");
text(26, 591, "OBV", FIRE);
text(68, 591, "Signal 9", "#8b1e8b");
text(26, 760, "Bostian's Intraday Intensity Index", FIRE);
[[13, 157], [210, 157], [681, 157], [13, 582], [13, 751]].forEach(([x, y]) => rect(x, y, 5, 7, "#ccc", 'stroke="#666"'));
out += `<path d="M16 175h15v15H16zM19 178h10v9H19zM22 178v9M26 178v9M19 182h10" fill="none" stroke="#555" stroke-width="1.500"/>`;
[["전환선 9: 9,250", TEAL], ["기준선 26: 8,310", GRAY], ["후행스팬 26: 8,910", PURPLE], ["선행스팬1 9,26: 8,780", ORANGE], ["선행스팬2 52,26: 7,925", SKY]].forEach(([s, c], i) => text(1785, 505 + 15 * i, s, c, "val"));

svg.innerHTML = out;

// drawing tool buttons
const WAVE = '<use href="#wave"/>';
const dot = (x, y) => `<path d="M${x - 2} ${y - 2}h4v4h-4z" fill="#e04848"/>`;
const nav = (d, w = 2) => `<path d="${d}" fill="none" stroke="#24398c" stroke-width="${w}"/>`;
const tools = [
  ["전환", nav("M8 8h10v7h-6v7h12", 5) + '<path d="M9 2v12L2 8zM22 16v12l7-6z" fill="#24398c"/>'],
  ["선택", WAVE + '<path d="M10 4v16l4-3 4 9 3-2-4-8h6z" fill="#24398c"/>'],
  ["십자선", WAVE + nav("M15 3v24M3 15h24") + dot(15, 3) + dot(15, 27) + dot(3, 15) + dot(27, 15)],
  ["수평선", WAVE + nav("M3 12h24") + dot(3, 12) + dot(27, 12)],
  ["수직선", WAVE + nav("M15 3v24") + dot(15, 3) + dot(15, 27)],
  ["추세선", WAVE + nav("M3 19L27 8") + dot(3, 19) + dot(27, 8)],
  ["연필", WAVE + nav("M2 22L14 9h5") + '<path d="M18 9l5-4v9z" fill="#f0d9a0"/><path d="M22 4h5v10h-5z" fill="#24398c"/>'],
  ["원호", '<path d="M2 18q13-14 26 0M2 22q13-14 26 0M3 26q12-14 24 0M3 13q12-7 25 0" fill="none" stroke="#999"/>' + nav("M7 6l6 19") + dot(7, 6) + dot(13, 25)],
  ["팬", WAVE + nav("M11 20L27 3M11 20L15 3M11 20l17-9M11 20h17", 1) + dot(11, 20)],
  ["시간대", WAVE + nav("M4 3v24M8 3v24M15 3v24M24 3v24")],
  ["삼각", '<path d="M19 9h9M19 12h9M21 15h7" stroke="#aaa"/>' + nav("M7 23l7-14 7 14") + '<g fill="#e05050"><circle cx="14" cy="8" r="3"/><circle cx="7" cy="23" r="3"/><circle cx="21" cy="23" r="3"/></g>'],
  ["격자", WAVE + nav("M3 5l22 22M14 3l13 13M3 16l10 11M27 5L5 27M17 3L3 17M27 17L16 27", 1) + dot(16, 16)],
  ["3선", WAVE + nav("M3 5h24M3 23h16") + '<path d="M3 12h24M3 16h16" stroke="#5568b0" stroke-dasharray="2 1"/><path d="M20 17h7v8h-7zM22 19h3v4h-3M22 21h3" fill="#fff" stroke="#444"/>'],
  ["4선", WAVE + nav("M3 5h24M3 23h16") + '<path d="M3 10h24M3 14h24M3 18h16" stroke="#5568b0" stroke-dasharray="2 1"/><path d="M20 17h8v9h-8z" fill="#555"/><path d="M23 19l-1 3h4M25 19v6" fill="none" stroke="#fff"/>'],
  ["이동", WAVE + nav("M8 12V6h14v5", 4) + '<path d="M3 11h10l-5 7zM17 10h10l-5 6z" fill="#24398c"/>'],
  ["사각형", '<path d="M4 8h19v15H4z" fill="#f7c19c" stroke="#e08048" stroke-width="1.500"/>' + WAVE],
  ["원", '<circle cx="14" cy="14" r="8" fill="#8fc4ee" stroke="#3a86d0" stroke-width="1.500"/>' + WAVE],
  ["문자", WAVE + '<text x="4" y="14">T</text>'],
  ["도형", WAVE + '<path d="M3 10h8v8H3z" fill="#cc0000"/><circle cx="21" cy="9" r="6" fill="#5e9c98"/><path d="M12 26l6-7 6 7z" fill="#0d3f7c"/>'],
  ["지우개", WAVE + '<rect x="13" y="5" width="11" height="15" rx="4" transform="rotate(38 18 12)" fill="#fffdf0" stroke="#333" stroke-width="1.500"/>'],
  ["모두 지우기", WAVE + '<rect x="13" y="3" width="11" height="14" rx="4" transform="rotate(38 18 10)" fill="#fffdf0" stroke="#333" stroke-width="1.500"/><text x="4" y="27" class="all">ALL</text>']
];
document.getElementById("toolset").innerHTML = tools.map(([name, art]) => `<button aria-label="${name}"><svg viewBox="0 0 30 30">${art}</svg></button>`).join("");
```
